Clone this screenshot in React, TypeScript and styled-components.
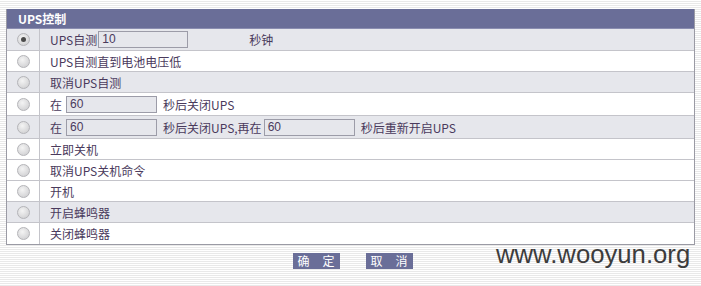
import React from "react";
import styled, { createGlobalStyle } from "styled-components";

const Global = createGlobalStyle`
  html, body { margin: 0; padding: 0; }
  body {
    width: 701px;
    height: 286px;
    overflow: hidden;
    background: repeating-linear-gradient(to bottom, #ffffff 0px, #ffffff 1px, #e9e9e9 1px, #e9e9e9 2px);
    font-family: "Noto Sans CJK SC", "Liberation Sans", sans-serif;
  }
`;

const Page = styled.div`
  position: relative;
  padding: 9px 6px 0 6px;
  height: 286px;
  box-sizing: border-box;
`;

const Panel = styled.div`
  border: 1px solid #9a9aa4;
  border-top: none;
  background: #ffffff;
`;

const Header = styled.div`
  height: 19px;
  background: #6a6e98;
  color: #ffffff;
  font-size: 12px;
  font-weight: bold;
  line-height: 19px;
  padding-left: 11px;
  border-bottom: 1px solid #8a8db0;
`;

const Row = styled.div<{ $shade: boolean; $h: number }>`
  display: grid;
  grid-template-columns: 33px 1fr;
  height: ${(p) => p.$h}px;
  background: ${(p) => (p.$shade ? "#e6e7ec" : "#ffffff")};
  border-bottom: 1px solid #c4c4ca;
  &:last-child { border-bottom: none; }
`;

const RadioCell = styled.div`
  display: flex;
  align-items: center;
  justify-content: center;
  border-right: 1px solid #c4c4ca;
`;

const Radio = styled.span<{ $on: boolean }>`
  width: 11px;
  height: 11px;
  border-radius: 50%;
  border: 1px solid #b4b4b8;
  background: radial-gradient(circle at 40% 35%, #f4f4f4 0%, #d6d6d8 70%, #c8c8cc 100%);
  display: flex;
  align-items: center;
  justify-content: center;
  &::after {
    content: "";
    display: ${(p) => (p.$on ? "block" : "none")};
    width: 5px;
    height: 5px;
    border-radius: 50%;
    background: #4a4a4a;
  }
`;

const Content = styled.div`
  display: flex;
  align-items: center;
  padding-left: 10px;
  font-size: 12px;
  color: #4a3a5c;
  white-space: nowrap;
`;

const Label = styled.span<{ $ml?: number }>`
  margin-left: ${(p) => p.$ml ?? 0}px;
`;

const Field = styled.div<{ $w: number; $ml: number }>`
  width: ${(p) => p.$w}px;
  height: 17px;
  margin-left: ${(p) => p.$ml}px;
  box-sizing: border-box;
  border: 1px solid #9c9ca8;
  background: #e6e7ec;
  font-size: 12px;
  line-height: 15px;
  padding-left: 3px;
  color: #4a3a5c;
  font-family: "Liberation Sans", sans-serif;
`;

const Buttons = styled.div`
  display: flex;
  justify-content: center;
  gap: 26px;
  padding-top: 8px;
  padding-left: 4px;
`;

const Btn = styled.div`
  width: 47px;
  height: 16px;
  background: #6a6e98;
  color: #ffffff;
  font-size: 12px;
  line-height: 16px;
  display: flex;
  justify-content: center;
  gap: 13px;
`;

const Watermark = styled.div`
  position: absolute;
  left: 496px;
  top: 240px;
  font-family: "Liberation Sans", sans-serif;
  font-size: 25.7px;
  color: #3c3c3c;
  letter-spacing: 0;
`;

type Item = { h: number; shade: boolean; on?: boolean; body: React.ReactNode };

const items: Item[] = [
  {
    h: 21, shade: true, on: true,
    body: (<><Label>UPS自测</Label><Field $w={90} $ml={1}>10</Field><Label $ml={61}>秒钟</Label></>),
  },
  { h: 20, shade: false, body: <Label>UPS自测直到电池电压低</Label> },
  { h: 20, shade: true, body: <Label>取消UPS自测</Label> },
  {
    h: 22, shade: false,
    body: (<><Label>在</Label><Field $w={91} $ml={4}>60</Field><Label $ml={6}>秒后关闭UPS</Label></>),
  },
  {
    h: 22, shade: true,
    body: (<><Label>在</Label><Field $w={91} $ml={4}>60</Field><Label $ml={6}>秒后关闭UPS,再在</Label><Field $w={91} $ml={2}>60</Field><Label $ml={6}>秒后重新开启UPS</Label></>),
  },
  { h: 20, shade: false, body: <Label>立即关机</Label> },
  { h: 20, shade: false, body: <Label>取消UPS关机命令</Label> },
  { h: 20, shade: false, body: <Label>开机</Label> },
  { h: 20, shade: true, body: <Label>开启蜂鸣器</Label> },
  { h: 21, shade: false, body: <Label>关闭蜂鸣器</Label> },
];

const ButtonLabel = ({ text }: { text: string }) => (
  <Btn>
    {text.split("").map((c, i) => (
      <span key={i}>{c}</span>
    ))}
  </Btn>
);

export default function App() {
  return (
    <Page>
      <Global />
      <Panel>
        <Header>UPS控制</Header>
        {items.map((it, i) => (
          <Row key={i} $shade={it.shade} $h={it.h}>
            <RadioCell><Radio $on={!!it.on} /></RadioCell>
            <Content>{it.body}</Content>
          </Row>
        ))}
      </Panel>
      <Buttons>
        <ButtonLabel text="确定" />
        <ButtonLabel text="取消" />
      </Buttons>
      <Watermark>www.wooyun.org</Watermark>
    </Page>
  );
}
